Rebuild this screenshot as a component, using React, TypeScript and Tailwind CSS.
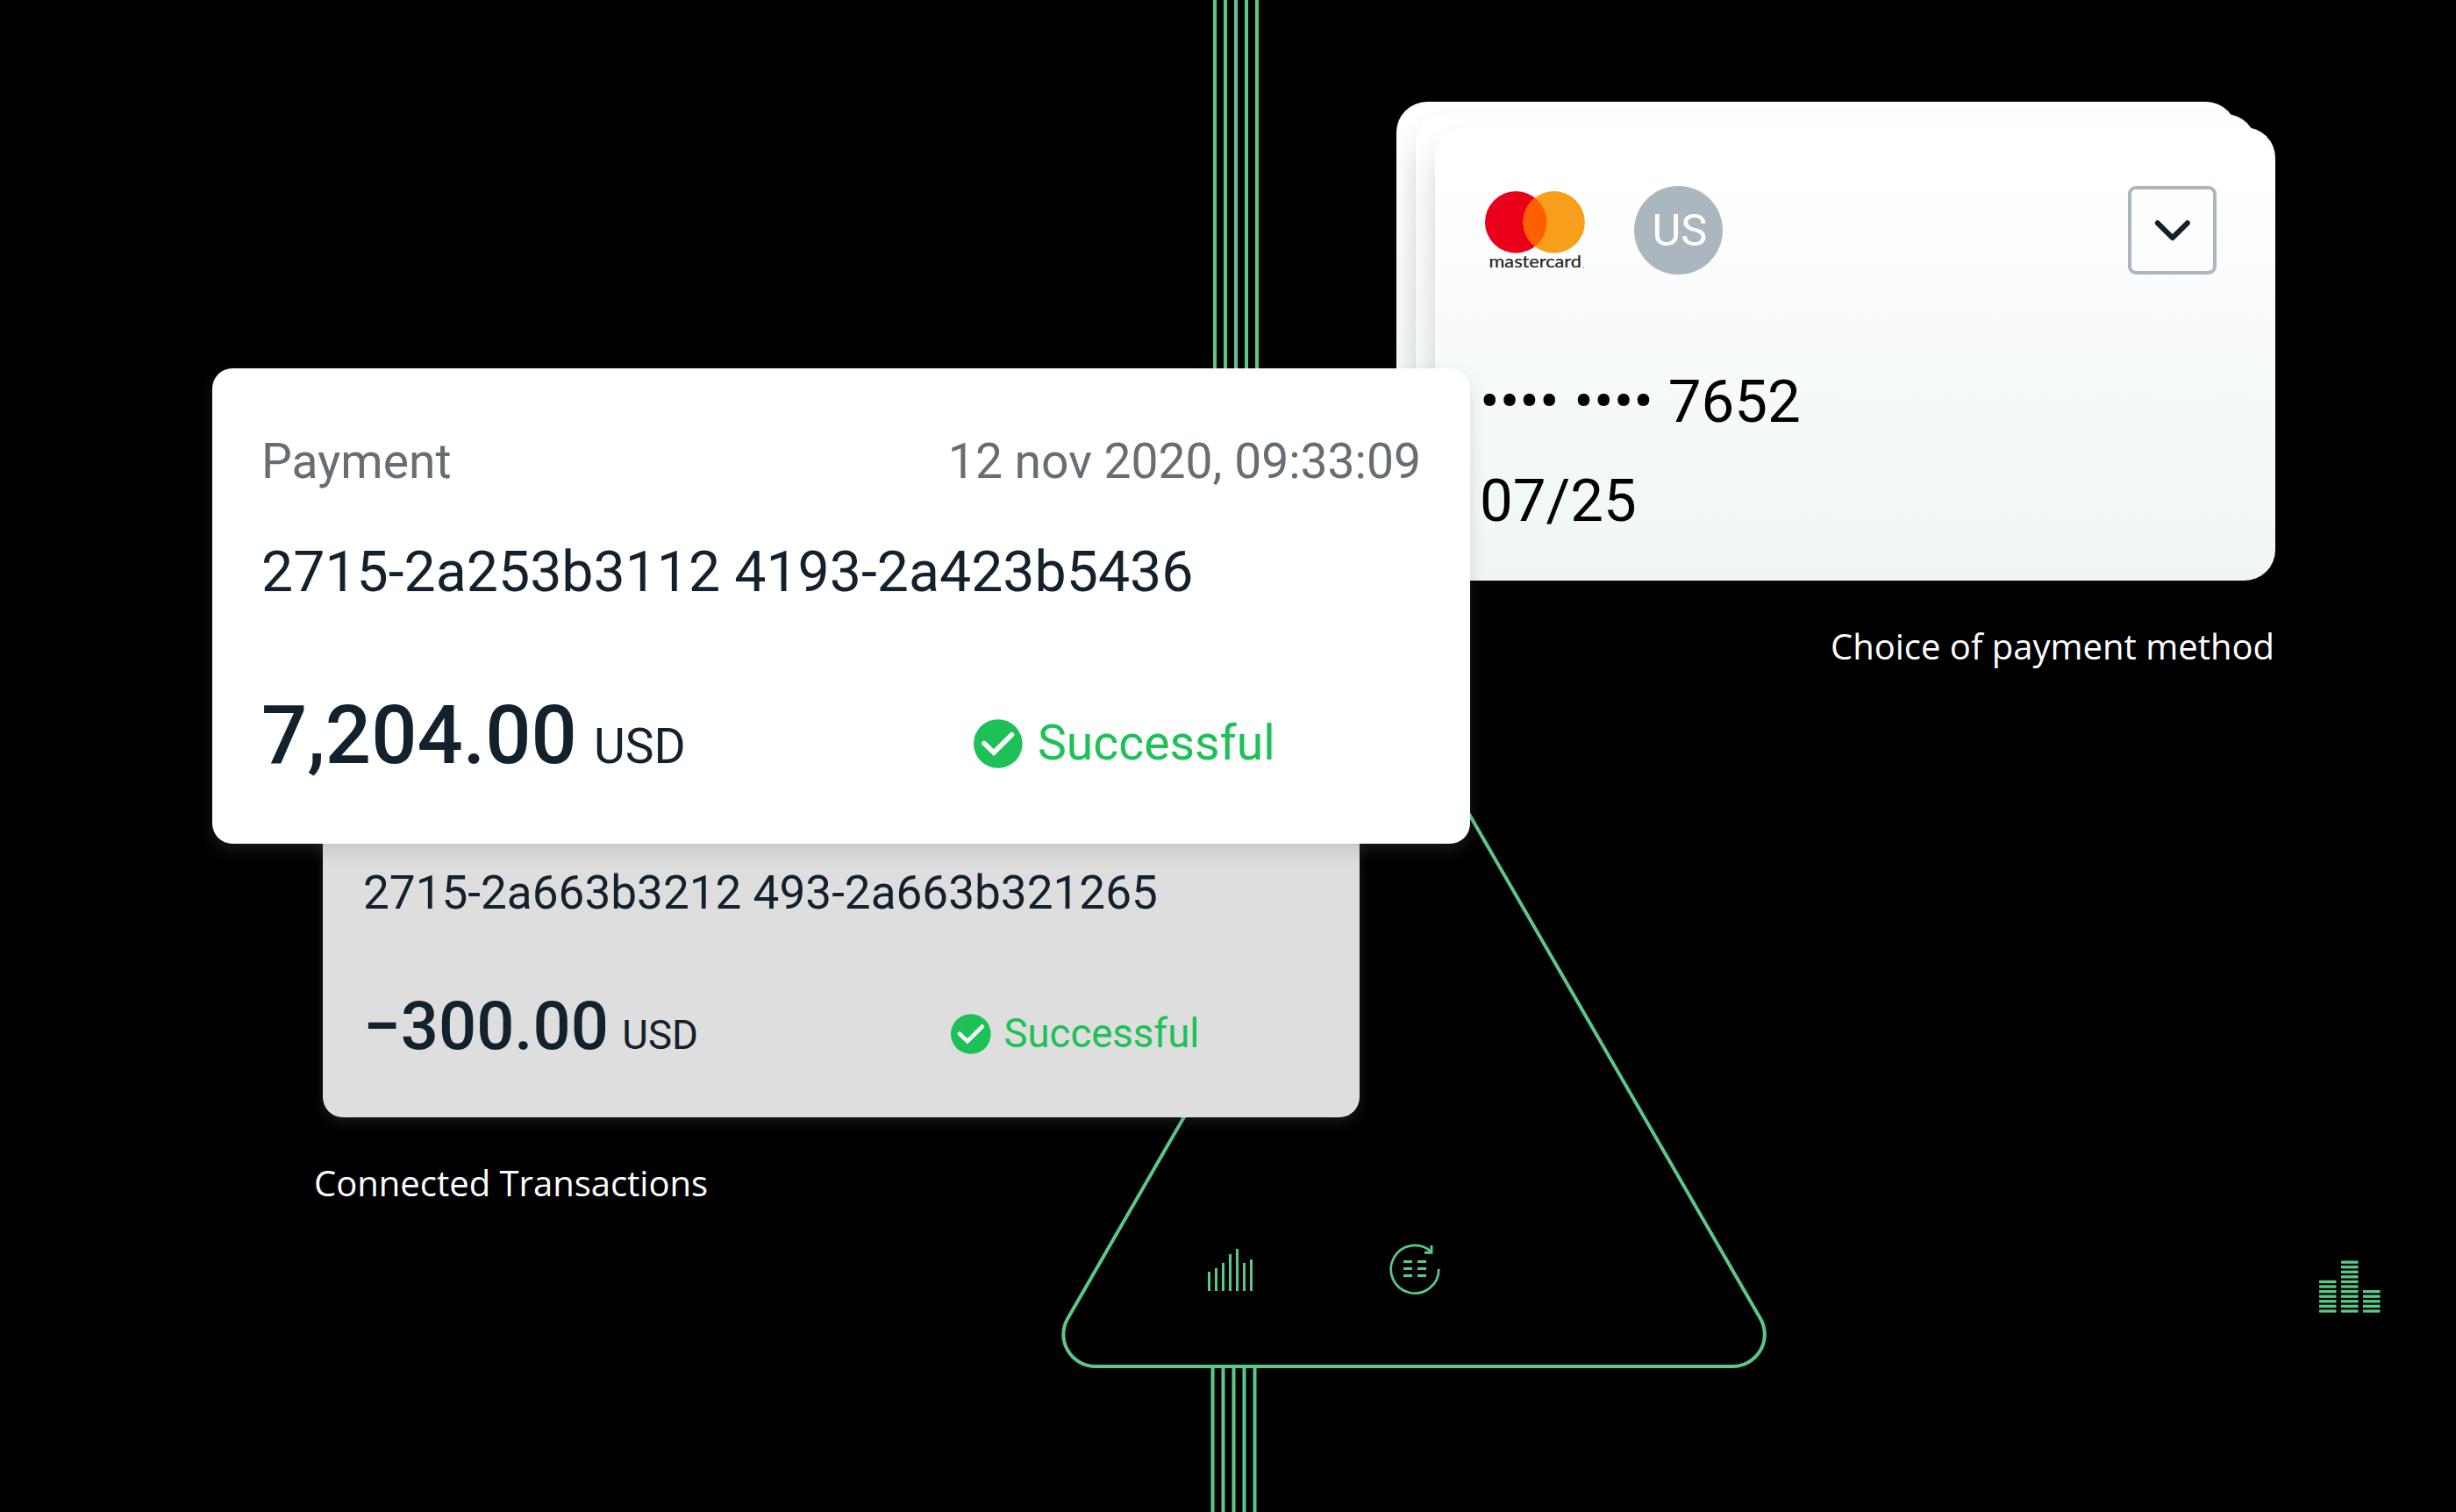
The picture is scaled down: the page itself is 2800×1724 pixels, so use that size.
const GREEN = "#5cc887";

const barTops = [1450, 1446, 1440, 1430, 1424, 1440, 1436];
const blockColumns = [
  { x: 2644, rows: 7 },
  { x: 2669, rows: 11 },
  { x: 2694, rows: 5 },
];

/** Green line art that sits behind the cards **/
function Backdrop() {
  return (
    <svg className="absolute inset-0" width="2800" height="1724" viewBox="0 0 2800 1724" fill="none">
      {/* Vertical rails */}
      {[0, 1, 2, 3, 4].map((i) => (
        <rect key={`top-${i}`} x={1383 + i * 12} y="0" width="4" height="500" fill={GREEN} />
      ))}
      {[0, 1, 2, 3, 4].map((i) => (
        <rect key={`bottom-${i}`} x={1380.5 + i * 12} y="1558" width="4" height="166" fill={GREEN} />
      ))}

      {/* Rounded triangle */}
      <path
        d="M1580.5 874.2 L1217.2 1503.4 A36.5 36.5 0 0 0 1248.8 1558 H1975.4 A36.5 36.5 0 0 0 2007 1503.4 L1643.7 874.2 A36.5 36.5 0 0 0 1580.5 874.2 Z"
        stroke={GREEN}
        strokeWidth="4"
      />

      {/* Bars */}
      {barTops.map((top, i) => (
        <rect key={`bar-${i}`} x={1377 + i * 8} y={top} width="3" height={1472 - top} fill={GREEN} />
      ))}

      {/* Refresh list */}
      <path d="M1640.3 1447 A27.3 27.3 0 1 1 1631.5 1427.2" stroke={GREEN} strokeWidth="2.7" />
      <path d="M1632 1420 V1428.3 H1624" stroke={GREEN} strokeWidth="3" />
      {[1437, 1445, 1453].map((y) => (
        <path key={y} d={`M1600 ${y + 1.5} h10 M1616 ${y + 1.5} h10`} stroke={GREEN} strokeWidth="3" />
      ))}

      {/* Stacked blocks */}
      {blockColumns.map((col) =>
        Array.from({ length: col.rows }, (_, i) => (
          <rect key={`${col.x}-${i}`} x={col.x} y={1493.3 - i * 5.58} width="19.5" height="3.3" fill={GREEN} />
        ))
      )}
    </svg>
  );
}

function CheckIcon({ className }: { className: string }) {
  return (
    <svg className={className} viewBox="0 0 56 56" fill="none">
      <circle cx="27.8" cy="28" r="27.8" fill="#1dc157" />
      <path d="M12 27.5 L23 38 L43.5 17.7" stroke="#fff" strokeWidth="5.6" strokeLinecap="round" />
    </svg>
  );
}

function MastercardLogo() {
  return (
    <svg className="shrink-0" width="116" height="92" viewBox="0 0 116 92">
      <circle cx="35.2" cy="35.3" r="35.2" fill="#eb001b" />
      <circle cx="78.6" cy="35.3" r="35.2" fill="#f79e1b" />
      <path d="M56.9 7.6 A35.2 35.2 0 0 1 56.9 63 A35.2 35.2 0 0 1 56.9 7.6 Z" fill="#ff5f00" />
      <text
        x="4.5"
        y="87.4"
        fontFamily="Lato, sans-serif"
        fontSize="19"
        textLength="105.5"
        lengthAdjust="spacingAndGlyphs"
        fill="#231f20"
        stroke="#231f20"
        strokeWidth="0.2"
      >
        mastercard
      </text>
      <circle cx="112.3" cy="87" r="0.8" fill="#8a8a8a" />
    </svg>
  );
}

function PaymentMethods() {
  return (
    <section className="relative -ml-[84px] w-[1002px] shrink-0 pt-[116px]">
      {/* Card deck, back to front */}
      <div className="relative h-[546px]">
        <div className="absolute top-0 left-0 h-[516px] w-[958px] rounded-[35px] bg-linear-to-b from-white from-10% to-[#eff5f6]" />
        <div className="absolute top-[14px] left-[22px] h-[516px] w-[958px] rounded-[35px] bg-linear-to-b from-white from-10% to-[#eff5f6] shadow-[0_22px_32px_rgba(0,0,0,0.17)]" />
        <div className="absolute top-[29px] left-[44px] h-[517px] w-[958px] rounded-[35px] bg-linear-to-b from-white from-10% to-[#eff5f5] pt-[67px] pr-[67px] pl-[50px] shadow-[0_22px_32px_rgba(0,0,0,0.17)]">
          <div className="flex items-start">
            <div className="mt-[6px] ml-[7px]">
              <MastercardLogo />
            </div>
            <div className="ml-[54px] flex size-[101px] items-center justify-center rounded-full bg-[#abb7bf] pl-[3px] text-[50.6px] text-white">
              US
            </div>
            <button className="ml-auto flex size-[101px] items-center justify-center rounded-[9px] border-4 border-[#abb7bf]">
              <svg width="44" height="26" viewBox="0 0 44 26" fill="none">
                <path d="M4.8 4.3 L21.8 21.2 L38.8 4.3" stroke="#13212d" strokeWidth="6" strokeLinecap="round" strokeLinejoin="round" />
              </svg>
            </button>
          </div>
          <p className="mt-[105px] ml-px text-[67.2px] leading-[80px] whitespace-nowrap text-black">•••• •••• 7652</p>
          <p className="mt-[33px] ml-px text-[67.2px] leading-[80px] text-black">07/25</p>
        </div>
      </div>
      <p className="mt-[47px] pr-px text-right font-['Open_Sans',sans-serif] text-[40px] leading-[56px] text-white">
        Choice of payment method
      </p>
    </section>
  );
}

function Transactions() {
  return (
    <section className="relative z-10 ml-[242px] w-[1434px] shrink-0 pt-[420px] text-[#13212d]">
      <div className="relative z-10 h-[542px] rounded-[23px] bg-white px-[56px] pt-[74px] shadow-[0_8px_18px_rgba(108,114,110,0.22)]">
        <div className="flex justify-between text-[55.2px] leading-[64px] text-[#666d73]">
          <span>Payment</span>
          <span>12 nov 2020, 09:33:09</span>
        </div>
        <p className="mt-[56px] text-[64.4px] leading-[76px] whitespace-nowrap">2715-2a253b3112 4193-2a423b5436</p>
        <div className="mt-[95px] flex items-start">
          <div className="flex w-[812px] items-baseline leading-[108px]">
            <span className="text-[92px] font-medium">7,204.00</span>
            <span className="ml-[19px] text-[55.2px]">USD</span>
          </div>
          <div className="mt-[35px] flex items-start gap-[17px] text-[55.3px] leading-[56px] text-[#1dc157]">
            <CheckIcon className="size-[56px]" />
            <span>Successful</span>
          </div>
        </div>
      </div>

      {/* Linked refund, tucked under the payment */}
      <div className="-mt-[40px] ml-[126px] h-[352px] w-[1182px] rounded-[23px] bg-[#dedede] px-[46px] pt-[64px] shadow-[0_6px_15px_rgba(108,114,110,0.22)]">
        <p className="text-[53.1px] leading-[64px] whitespace-nowrap">2715-2a663b3212 493-2a663b321265</p>
        <div className="mt-[76px] flex items-start">
          <div className="flex w-[670px] items-baseline leading-[88px]">
            <span className="text-[76px] font-medium">−300.00</span>
            <span className="ml-[15.5px] text-[45.6px]">USD</span>
          </div>
          <div className="mt-[30px] flex items-start gap-[14.5px] text-[45.5px] leading-[46px] text-[#1dc157]">
            <CheckIcon className="size-[46px]" />
            <span>Successful</span>
          </div>
        </div>
      </div>

      <p className="mt-[47px] ml-[116px] font-['Open_Sans',sans-serif] text-[40px] leading-[56px] text-white">
        Connected Transactions
      </p>
    </section>
  );
}

export default function App() {
  return (
    <main className="relative flex h-[1724px] w-[2800px] items-start overflow-hidden bg-black font-[Roboto,sans-serif]">
      <Backdrop />
      <Transactions />
      <PaymentMethods />
    </main>
  );
}
